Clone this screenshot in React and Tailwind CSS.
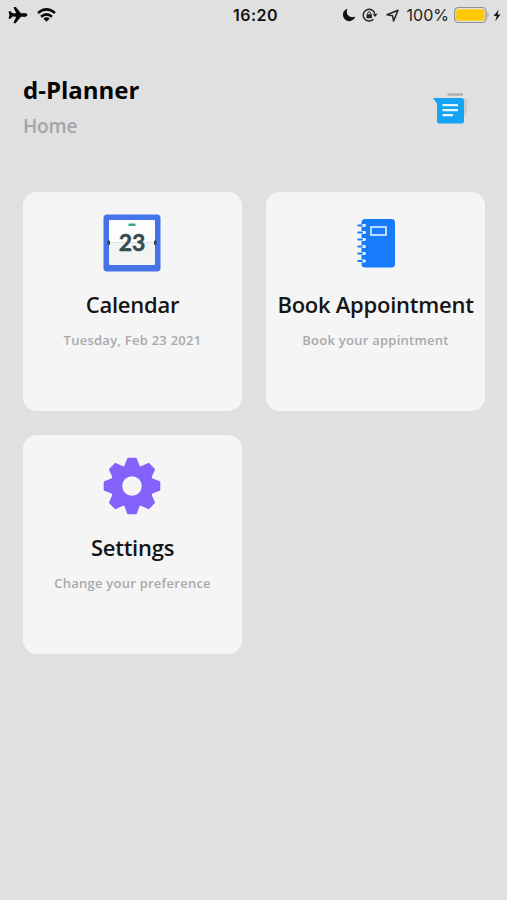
import { IoAirplane, IoMoon } from "react-icons/io5";

const cards = [
    {
        id: "calendar",
        title: "Calendar",
        subtitle: "Tuesday, Feb 23 2021",
        icon: CalendarIcon,
    },
    {
        id: "book",
        title: "Book Appointment",
        subtitle: "Book your appintment",
        icon: NotebookIcon,
    },
    {
        id: "settings",
        title: "Settings",
        subtitle: "Change your preference",
        icon: GearIcon,
    },
];

function CalendarIcon() {
    return (
        <svg width="58" height="58" viewBox="0 0 58 58" className="mr-[2px] mb-[1px]">
            <rect x="0.5" y="0.5" width="57" height="57" rx="3.5" fill="#4773e8" />
            <rect x="6" y="6" width="46" height="23" rx="1" fill="#fdfdfd" />
            <rect x="6" y="29" width="46" height="22" rx="1" fill="#f2f3f3" />
            <path d="M6 28.5H52" stroke="#dfe3e4" strokeWidth="1" />
            <rect x="25.5" y="9.5" width="7" height="2.5" rx="0.5" fill="#36a693" />
            <rect x="4.5" y="26.5" width="2.5" height="4.5" rx="1" fill="#2b4349" />
            <rect x="51" y="26.5" width="2.5" height="4.5" rx="1" fill="#2b4349" />
            <text
                x="29"
                y="37.3"
                textAnchor="middle"
                fontSize="23"
                fontWeight="700"
                fill="#344b50"
                stroke="#344b50"
                strokeWidth="0.5"
                className="font-['Lato',sans-serif]"
            >
                23
            </text>
        </svg>
    );
}

function NotebookIcon() {
    return (
        <svg width="40" height="50" viewBox="0 0 40 50">
            <rect x="5.5" y="1" width="33.5" height="48.5" rx="3.5" fill="#167cfb" />
            {[7.5, 14.5, 21.5, 28.5, 35.5, 43].map((y) => (
                <g key={y}>
                    <path d={`M5 ${y}H8.5`} stroke="#f5f5f5" strokeWidth="2.8" strokeLinecap="round" />
                    <path d={`M2.3 ${y}H6`} stroke="#167cfb" strokeWidth="2" strokeLinecap="round" />
                </g>
            ))}
            <rect x="15" y="9" width="15" height="8" fill="none" stroke="#e8f1fd" strokeWidth="1.6" />
        </svg>
    );
}

function GearIcon() {
    return (
        <svg width="58" height="58" viewBox="-29 -29 58 58" fill="#8561fb" className="mr-[2px]">
            <circle r="21.3" />
            {[0, 45, 90, 135, 180, 225, 270, 315].map((angle) => (
                <path
                    key={angle}
                    d="M-7 -19L-3.8 -27.3H3.8L7 -19Z"
                    stroke="#8561fb"
                    strokeWidth="2"
                    strokeLinejoin="round"
                    transform={`rotate(${angle})`}
                />
            ))}
            <circle r="9.8" fill="#f5f5f5" />
        </svg>
    );
}

function MessagesIcon() {
    return (
        <svg width="40" height="40" viewBox="0 0 40 40">
            <path d="M32 12Q34 18 31 28" stroke="#c9cbcc" strokeWidth="3" fill="none" />
            <path d="M14.5 7.5H30" stroke="#aeb0b1" strokeWidth="2.6" />
            <path d="M31 1H38" stroke="#ececec" strokeWidth="1" />
            <path
                d="M0 11H28.5Q31 11 31 13.5V34Q31 36.5 28.5 36.5H6.5Q4 36.5 4 34V16.5Z"
                fill="#13a4f3"
            />
            <path d="M9.5 18.2H25M9.5 23.2H25M9.5 28.2H20" stroke="#e5f5fe" strokeWidth="2.3" />
        </svg>
    );
}

function WifiIcon() {
    return (
        <svg width="19" height="14" viewBox="0 0 19 14" fill="none" stroke="#090909" strokeWidth="2.5">
            <path d="M1 5Q9.5 -2.2 18 5" />
            <path d="M4 8.7Q9.5 4 15 8.7" />
            <path d="M6.3 10.5Q9.5 8.2 12.7 10.5L9.5 13.8Z" fill="#090909" stroke="none" />
        </svg>
    );
}

function RotationLockIcon() {
    return (
        <svg width="16" height="14" viewBox="0 0 16 14" fill="none" stroke="#222">
            <path d="M12.8 5.5A5.9 5.9 0 1 0 11.4 11.2" strokeWidth="1.4" />
            <path d="M10.6 5.8H15.6L13.1 9Z" fill="#222" stroke="none" />
            <rect x="4.5" y="6.3" width="5.4" height="4" rx="0.5" fill="#222" stroke="none" />
            <path d="M5.7 6.5V5.3A1.5 1.5 0 0 1 8.7 5.3V6.5" strokeWidth="1" />
        </svg>
    );
}

function StatusBar() {
    return (
        <div className="grid h-[30px] grid-cols-[1fr_auto_1fr] items-center pr-[6px] pl-[8px] font-['Inter',sans-serif] text-[#111]">
            <div className="flex items-center gap-[9px]">
                <IoAirplane size={20} className="text-[#090909]" />
                <WifiIcon />
            </div>
            <div className="pl-[2px] text-[16px] font-semibold tracking-[0.5px]">16:20</div>
            <div className="flex items-center justify-end">
                <IoMoon size={14} className="mr-[6px]" />
                <RotationLockIcon />
                <svg width="13" height="13" viewBox="0 0 13 13" className="mr-[8px] ml-[8px]">
                    <path d="M1 5.8L12 1.2L7.6 12L6.6 6.8Z" fill="none" stroke="#222" strokeWidth="1.5" strokeLinejoin="round" />
                </svg>
                <span className="mr-[5px] text-[16px] text-[#222]">100%</span>
                <svg width="37" height="18" viewBox="0 0 37 18">
                    <rect x="0.6" y="1.5" width="31.5" height="15" rx="4" fill="none" stroke="#929292" strokeWidth="1.2" />
                    <rect x="2.2" y="3.2" width="28.3" height="11.6" rx="2" fill="#fec803" />
                    <path d="M33.5 6.5Q35.8 9 33.5 11.5Z" fill="#929292" />
                </svg>
                <svg width="8" height="13" viewBox="0 0 8 13" className="ml-[2px]">
                    <path d="M5.8 0.5L0.5 7H3.7L2.2 12.5L7.5 5.6H4.4Z" fill="#161616" />
                </svg>
            </div>
        </div>
    );
}

export default function App() {
    return (
        <div className="h-[900px] w-[507px] overflow-hidden bg-[#e0e0e0] font-['Open_Sans',sans-serif]">
            <StatusBar />

            {/* Header */}
            <div className="flex h-[162px] items-start justify-between pt-[42px] pr-[34px] pl-[23px]">
                <div>
                    <h1 className="text-[24px] leading-[36px] font-bold text-[#050505]">d-Planner</h1>
                    <p className="text-[19px] leading-[36px] font-semibold tracking-[-0.2px] text-[#a5a5aa]">Home</p>
                </div>
                <div className="mt-[15px]">
                    <MessagesIcon />
                </div>
            </div>

            {/* Cards */}
            <div className="grid grid-cols-[219px_219px] gap-[24px] pl-[23px]">
                {cards.map((card) => (
                    <div
                        key={card.id}
                        className="flex h-[219px] flex-col items-center rounded-[14px] bg-[#f5f5f5] pt-[21px]"
                    >
                        <div className="flex h-[60px] items-center">
                            <card.icon />
                        </div>
                        <h2 className="mt-[15px] text-[22px] leading-[32px] font-semibold tracking-[-0.25px] whitespace-nowrap text-[#151515]">
                            {card.title}
                        </h2>
                        <p className="mt-[9px] text-[13px] leading-[22px] font-semibold tracking-[0.25px] whitespace-nowrap text-[#a9a9a9]">
                            {card.subtitle}
                        </p>
                    </div>
                ))}
            </div>
        </div>
    );
}
